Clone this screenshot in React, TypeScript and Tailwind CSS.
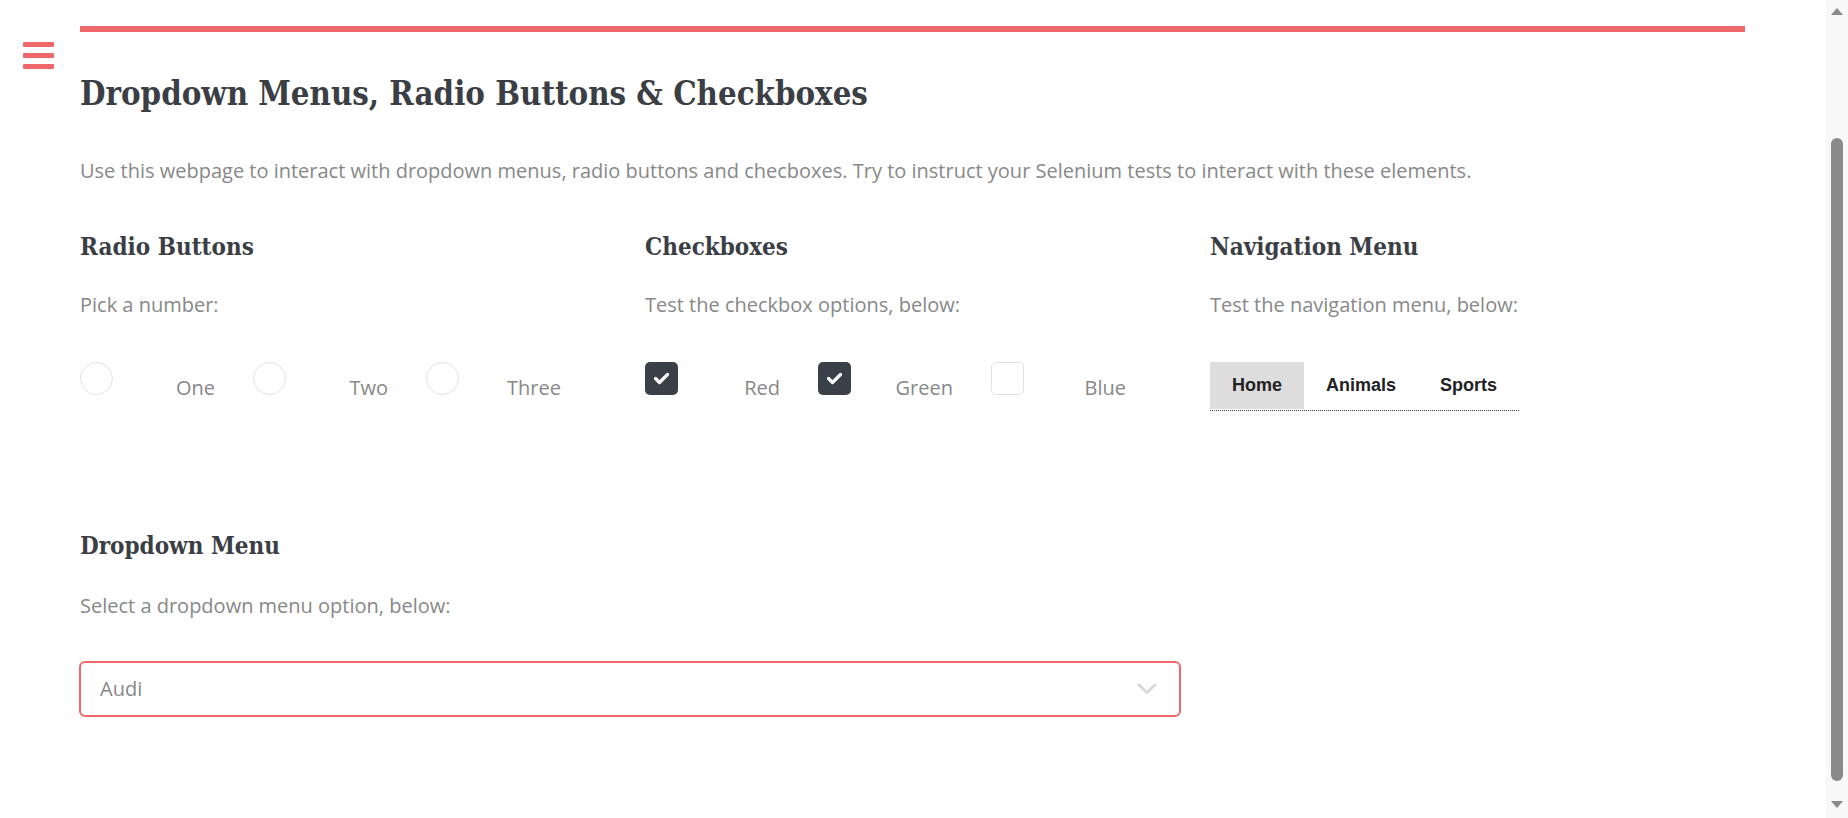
import React from "react";

const slab = { fontFamily: "'DejaVu Serif Condensed', 'DejaVu Serif', serif" };

function Radio({ label }: { label: string }) {
  return (
    <div className="flex w-[135px] items-start justify-between">
      <span className="block h-[33px] w-[33px] rounded-full border border-[#e2e2e2] bg-white" />
      <span className="mt-[12px] text-[20px] leading-[28px] text-[#888]">{label}</span>
    </div>
  );
}

function Check({ label, checked }: { label: string; checked: boolean }) {
  return (
    <div className="flex w-[135px] items-start justify-between">
      {checked ? (
        <span className="flex h-[33px] w-[33px] items-center justify-center rounded-[5px] bg-[#3a4047]">
          <svg width="33" height="33" viewBox="0 0 33 33">
            <path d="M10.5 16.5 L14.5 20.5 L22.5 12.5" fill="none" stroke="#fff" strokeWidth="3.2" strokeLinecap="round" strokeLinejoin="round" />
          </svg>
        </span>
      ) : (
        <span className="block h-[33px] w-[33px] rounded-[5px] border border-[#e2e2e2] bg-white" />
      )}
      <span className="mt-[12px] text-[20px] leading-[28px] text-[#888]">{label}</span>
    </div>
  );
}

export default function App() {
  return (
    <div className="flex h-[818px] w-full overflow-hidden bg-white" style={{ fontFamily: "'Open Sans', sans-serif" }}>
      <div className="w-[80px] shrink-0 pl-[23px] pt-[42px]">
        <div className="flex w-[31px] flex-col gap-[6px]">
          <span className="block h-[5px] rounded-[1px] bg-[#ef676b]" />
          <span className="block h-[5px] rounded-[1px] bg-[#ef676b]" />
          <span className="block h-[5px] rounded-[1px] bg-[#ef676b]" />
        </div>
      </div>
      <main className="w-[1665px] shrink-0 pt-[26px]">
        <div className="h-[6px] bg-[#ef676b]" />
        <h1 className="mt-[44px] text-[32.7px] font-bold leading-[36px] text-[#3b3f45]" style={slab}>
          Dropdown Menus, Radio Buttons &amp; Checkboxes
        </h1>
        <p className="mt-[45px] text-[20px] leading-[28px] text-[#888]">
          Use this webpage to interact with dropdown menus, radio buttons and checboxes. Try to instruct your Selenium tests to interact with these elements.
        </p>
        <div className="mt-[47px] grid grid-cols-3 gap-x-[30px]">
          <section>
            <h2 className="text-[24px] font-bold leading-[30px] text-[#3b3f45]" style={slab}>Radio Buttons</h2>
            <p className="mt-[29px] text-[20px] leading-[28px] text-[#888]">Pick a number:</p>
            <div className="mt-[43px] flex gap-[38px]">
              <Radio label="One" />
              <Radio label="Two" />
              <Radio label="Three" />
            </div>
          </section>
          <section>
            <h2 className="text-[24px] font-bold leading-[30px] text-[#3b3f45]" style={slab}>Checkboxes</h2>
            <p className="mt-[29px] text-[20px] leading-[28px] text-[#888]">Test the checkbox options, below:</p>
            <div className="mt-[43px] flex gap-[38px]">
              <Check label="Red" checked />
              <Check label="Green" checked />
              <Check label="Blue" checked={false} />
            </div>
          </section>
          <section>
            <h2 className="text-[24px] font-bold leading-[30px] text-[#3b3f45]" style={slab}>Navigation Menu</h2>
            <p className="mt-[29px] text-[20px] leading-[28px] text-[#888]">Test the navigation menu, below:</p>
            <ul
              className="mt-[43px] inline-flex border-b border-dotted border-[#444] pb-[1px] text-[18px] font-bold text-[#222]"
              style={{ fontFamily: "'Liberation Sans', Arial, sans-serif" }}
            >
              <li className="flex h-[47px] items-center bg-[#dddddd] px-[22px]">Home</li>
              <li className="flex h-[47px] items-center px-[22px]">Animals</li>
              <li className="flex h-[47px] items-center px-[22px]">Sports</li>
            </ul>
          </section>
        </div>
        <h2 className="mt-[120px] text-[24px] font-bold leading-[30px] text-[#3b3f45]" style={slab}>Dropdown Menu</h2>
        <p className="mt-[31px] text-[20px] leading-[28px] text-[#888]">Select a dropdown menu option, below:</p>
        <div className="mt-[41px] ml-[-1px] flex h-[56px] w-[1102px] items-center justify-between rounded-[6px] border-2 border-[#ef676b] pl-[19px] pr-[22px]">
          <span className="text-[20px] leading-[28px] text-[#888]">Audi</span>
          <svg width="20" height="12" viewBox="0 0 20 12">
            <path d="M2 2 L10 9.5 L18 2" fill="none" stroke="#d8d8d8" strokeWidth="3" strokeLinecap="round" strokeLinejoin="round" />
          </svg>
        </div>
      </main>
      <div className="flex-1" />
      <div className="flex w-[22px] shrink-0 flex-col items-center bg-[#f8f8f8]">
        <svg className="mt-[8px]" width="12" height="7" viewBox="0 0 12 7">
          <path d="M0 7 L6 0 L12 7 Z" fill="#8a8a8a" />
        </svg>
        <div className="mt-[123px] h-[643px] w-[12px] rounded-full bg-[#8a8a8a]" />
        <div className="flex-1" />
        <svg className="mb-[10px]" width="12" height="7" viewBox="0 0 12 7">
          <path d="M0 0 L12 0 L6 7 Z" fill="#8a8a8a" />
        </svg>
      </div>
    </div>
  );
}
